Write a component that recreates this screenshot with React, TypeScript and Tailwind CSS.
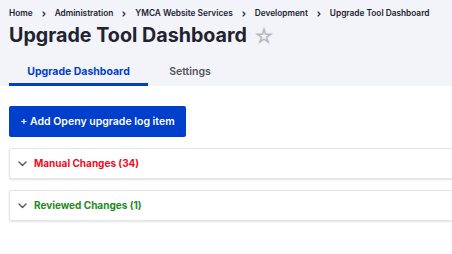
import React from "react";

function Chevron() {
  return (
    <svg width="9" height="6" viewBox="0 0 9 6" fill="none" className="shrink-0">
      <path d="M1 1l3.5 3.5L8 1" stroke="#55565b" strokeWidth="1.4" strokeLinecap="round" strokeLinejoin="round" />
    </svg>
  );
}

function Sep() {
  return (
    <svg width="4" height="6" viewBox="0 0 4 6" fill="none" className="mx-[9px] shrink-0">
      <path d="M1 1l2 2-2 2" stroke="#222330" strokeWidth="1.1" strokeLinecap="round" strokeLinejoin="round" />
    </svg>
  );
}

export default function App() {
  return (
    <div className="w-[452px] h-[254px] overflow-hidden bg-white" style={{ fontFamily: "Inter, 'Noto Sans', sans-serif" }}>
      <div className="bg-[#f3f4f9] pl-[9px] pt-[7px] h-[86px] flex flex-col">
        <div className="flex items-center text-[8.3px] font-semibold text-[#222330] h-[13px] whitespace-nowrap">
          <span>Home</span>
          <Sep />
          <span>Administration</span>
          <Sep />
          <span>YMCA Website Services</span>
          <Sep />
          <span>Development</span>
          <Sep />
          <span>Upgrade Tool Dashboard</span>
        </div>
        <div className="flex items-center mt-[1px] h-[30px]">
          <h1 className="text-[19.7px] font-bold text-[#222330] leading-none">Upgrade Tool Dashboard</h1>
          <span className="ml-[6px] text-[21px] leading-none text-[#b8b9be]">☆</span>
        </div>
        <div className="flex mt-auto h-[31px]">
          <div className="w-[139px] flex flex-col">
            <div className="flex-1 flex items-center justify-center pt-[5px] text-[10.5px] font-bold text-[#003ecc]">Upgrade Dashboard</div>
            <div className="h-[3px] bg-[#003ecc]" />
          </div>
          <div className="w-[84px] flex items-center justify-center pt-[5px] pb-[3px] text-[10.5px] font-semibold text-[#55565b]">Settings</div>
        </div>
      </div>
      <div className="pl-[9px] pt-[20px] flex flex-col">
        <div className="w-[177px] h-[31px] bg-[#003ecc] rounded-[2px] flex items-center justify-center text-white text-[10.5px] font-semibold whitespace-nowrap">
          + Add Openy upgrade log item
        </div>
        <div className="mt-[11px] w-[470px] h-[31px] bg-white border border-[#e4e5ea] rounded-[2px] shadow-[0_1px_2px_rgba(0,0,0,0.12)] flex items-center pl-[8px] gap-[7px]">
          <Chevron />
          <span className="text-[10px] font-bold text-[#ee0a1e]">Manual Changes (34)</span>
        </div>
        <div className="mt-[11px] w-[470px] h-[31px] bg-white border border-[#e4e5ea] rounded-[2px] shadow-[0_1px_2px_rgba(0,0,0,0.12)] flex items-center pl-[8px] gap-[7px]">
          <Chevron />
          <span className="text-[10px] font-bold text-[#1c8a1c]">Reviewed Changes (1)</span>
        </div>
      </div>
    </div>
  );
}
